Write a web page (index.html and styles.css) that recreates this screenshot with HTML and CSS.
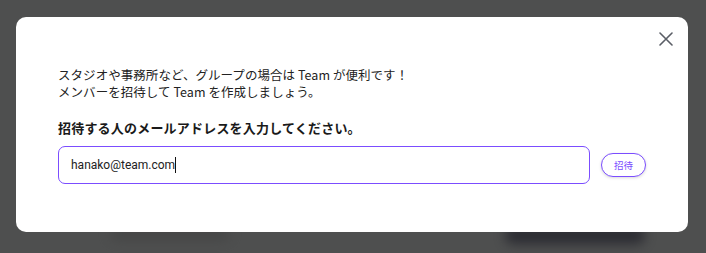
FILE: index.html
```html
<!DOCTYPE html>
<html lang="ja">
<head>
<meta charset="utf-8">
<link rel="stylesheet" href="styles.css">
</head>
<body>
<div class="backdrop">
  <div class="ghost ghost-a"></div>
  <div class="ghost ghost-b"></div>
</div>
<div class="overlay">
  <div class="modal">
    <button class="close" aria-label="閉じる">
      <svg width="14" height="14" viewBox="0 0 14 14"><path d="M1 1L13 13M13 1L1 13" stroke="#5a5e66" stroke-width="1.6" stroke-linecap="round"/></svg>
    </button>
    <p class="intro">スタジオや事務所など、グループの場合は Team が便利です！<br>メンバーを招待して Team を作成しましょう。</p>
    <p class="label">招待する人のメールアドレスを入力してください。</p>
    <div class="row">
      <div class="input"><span>hanako@team.com</span><span class="caret"></span></div>
      <button class="invite">招待</button>
    </div>
  </div>
</div>
</body>
</html>
```

FILE: styles.css
```css
html, body {
  margin: 0;
  padding: 0;
}
body {
  width: 706px;
  height: 253px;
  background: #4e4f4f;
  position: relative;
  overflow: hidden;
  font-family: "Noto Sans CJK JP", "Noto Sans", sans-serif;
  color: #222;
}
.backdrop {
  position: absolute;
  inset: 0;
}
.ghost {
  position: absolute;
  background: #23232b;
  filter: blur(6px);
  border-radius: 8px;
}
.ghost-a {
  left: 505px;
  top: 226px;
  width: 140px;
  height: 18px;
  opacity: 0.8;
}
.ghost-b {
  left: 110px;
  top: 228px;
  width: 120px;
  height: 12px;
  background: #3f4040;
  opacity: 0.6;
}
.overlay {
  position: absolute;
  inset: 0;
  padding: 17px 18px 21px 16px;
}
.modal {
  position: relative;
  background: #fff;
  border-radius: 10px;
  height: 215px;
  box-sizing: border-box;
  padding: 49px 42px 0 42px;
}
.close {
  position: absolute;
  top: 15px;
  right: 15px;
  width: 14px;
  height: 14px;
  padding: 0;
  border: 0;
  background: none;
  display: flex;
}
.intro {
  margin: 0;
  font-size: 12.5px;
  line-height: 17px;
  letter-spacing: 0.05px;
  color: #222;
}
.label {
  margin: 19px 0 0 0;
  font-size: 13px;
  line-height: 18px;
  font-weight: 700;
  letter-spacing: 0.2px;
  color: #1a1a1a;
}
.row {
  margin-top: 9px;
  display: flex;
  align-items: center;
  gap: 11px;
}
.input {
  width: 532px;
  height: 38px;
  box-sizing: border-box;
  border: 1.5px solid #7b4dff;
  border-radius: 7px;
  display: flex;
  align-items: center;
  padding-left: 12px;
  font-family: Roboto, "Liberation Sans", sans-serif;
  font-size: 12px;
  color: #222;
}
.caret {
  display: inline-block;
  width: 1px;
  height: 16px;
  background: #111;
  margin-left: 0;
}
.invite {
  width: 45px;
  height: 24px;
  border: 1.5px solid #7b4dff;
  border-radius: 12px;
  background: #fff;
  color: #7b4dff;
  font-family: "Noto Sans CJK JP", sans-serif;
  font-size: 9.5px;
  padding: 0;
  box-shadow: 0 1px 3px rgba(0,0,0,0.15);
}
```
